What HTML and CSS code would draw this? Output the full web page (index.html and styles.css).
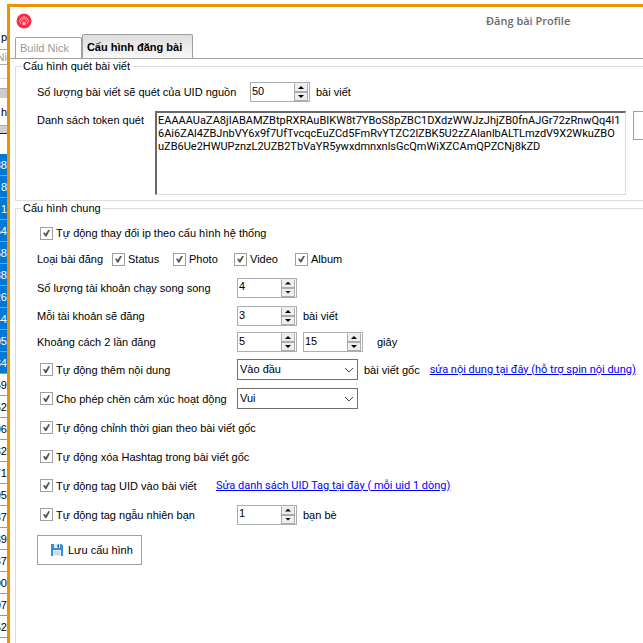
FILE: index.html
```html
<!DOCTYPE html>
<html lang="vi">
<head>
<meta charset="utf-8">
<title>Đăng bài Profile</title>
<link rel="stylesheet" href="styles.css">
</head>
<body>
<div class="desktop">
  <aside class="behind">
    <div class="behind-label">p</div>
    <div class="behind-box">Ni</div>
    <div class="behind-line"></div>
    <div class="behind-bar"></div>
    <div class="behind-caption">h</div>
    <div class="behind-head"></div>
    <ul class="cells">
      <li class="picked">38</li><li class="picked">8</li><li class="picked">1</li><li class="picked">54</li><li class="picked">58</li><li class="picked">38</li><li class="picked">26</li><li class="picked">44</li><li class="picked">05</li><li class="picked">34</li>
      <li>59</li><li>52</li><li>06</li><li>32</li><li>71</li><li>05</li><li>37</li><li>39</li><li>37</li><li>00</li><li>07</li><li>52</li><li></li>
    </ul>
  </aside>
  <main class="dialog">
    <header class="titlebar">
      <svg class="logo" viewBox="0 0 16 16" aria-hidden="true">
        <circle cx="8" cy="8" r="7.5" fill="#fb2b47"/>
        <path d="M5 11a4.200 4.200 0 1 1 6 0M6.200 9a2.200 2.200 0 1 1 3.600 0" fill="none" stroke="#ffc3cb" stroke-width=".8"/>
        <path d="M6.500 12V9.800L8 8.500l1.500 1.300V12z" fill="#ffc3cb"/>
      </svg>
      <h1>Đăng bài Profile</h1>
    </header>
    <nav class="tabs">
      <button type="button" class="tab">Build Nick</button>
      <button type="button" class="tab active">Cấu hình đăng bài</button>
    </nav>
    <form class="panel">
      <fieldset class="group scan">
        <legend>Cấu hình quét bài viết</legend>
        <div class="line scan-count">
          <label for="count">Số lượng bài viết sẽ quét của UID nguồn</label>
          <span class="spin"><input id="count" type="number" value="50"><span class="arrows"><button type="button" class="up" aria-label="Tăng"></button><button type="button" class="down" aria-label="Giảm"></button></span></span>
          <span class="unit">bài viết</span>
        </div>
        <div class="tokens">
          <label for="tokens">Danh sách token quét</label>
          <textarea id="tokens" spellcheck="false">EAAAAUaZA8jIABAMZBtpRXRAuBIKW8t7YBoS8pZBC1DXdzWWJzJhjZB0fnAJGr72zRnwQq4l1
6Ai6ZAl4ZBJnbVY6x9f7UfTvcqcEuZCd5FmRvYTZC2lZBK5U2zZAlanlbALTLmzdV9X2WkuZBO
uZB6Ue2HWUPznzL2UZB2TbVaYR5ywxdmnxnlsGcQmWiXZCAmQPZCNj8kZD</textarea>
          <button type="button" class="side-button" aria-label="Token"></button>
        </div>
      </fieldset>
      <fieldset class="group common">
        <legend>Cấu hình chung</legend>
        <div class="rows">
          <div class="line"><label class="check"><input type="checkbox" checked>Tự động thay đổi ip theo cấu hình hệ thống</label></div>
          <div class="line kinds">
            <span>Loại bài đăng</span>
            <label class="check"><input type="checkbox" checked>Status</label>
            <label class="check"><input type="checkbox" checked>Photo</label>
            <label class="check"><input type="checkbox" checked>Video</label>
            <label class="check"><input type="checkbox" checked>Album</label>
          </div>
          <div class="line">
            <label class="name" for="parallel">Số lượng tài khoản chạy song song</label>
            <span class="spin"><input id="parallel" type="number" value="4"><span class="arrows"><button type="button" class="up" aria-label="Tăng"></button><button type="button" class="down" aria-label="Giảm"></button></span></span>
          </div>
          <div class="line">
            <label class="name" for="each">Mỗi tài khoản sẽ đăng</label>
            <span class="spin"><input id="each" type="number" value="3"><span class="arrows"><button type="button" class="up" aria-label="Tăng"></button><button type="button" class="down" aria-label="Giảm"></button></span></span>
            <span class="unit">bài viết</span>
          </div>
          <div class="line">
            <label class="name" for="from">Khoảng cách 2 lần đăng</label>
            <span class="spin"><input id="from" type="number" value="5"><span class="arrows"><button type="button" class="up" aria-label="Tăng"></button><button type="button" class="down" aria-label="Giảm"></button></span></span>
            <span class="spin"><input type="number" value="15" aria-label="Đến"><span class="arrows"><button type="button" class="up" aria-label="Tăng"></button><button type="button" class="down" aria-label="Giảm"></button></span></span>
            <span class="unit seconds">giây</span>
          </div>
          <div class="line">
            <div class="name"><label class="check"><input type="checkbox" checked>Tự động thêm nội dung</label></div>
            <span class="drop"><select aria-label="Vị trí"><option>Vào đầu</option></select><svg viewBox="0 0 10 6" aria-hidden="true"><path d="M1 1l4 4 4-4"/></svg></span>
            <span class="origin">bài viết gốc</span>
            <a href="#noidung">sửa nội dung tại đây (hỗ trợ spin nội dung)</a>
          </div>
          <div class="line">
            <div class="name"><label class="check"><input type="checkbox" checked>Cho phép chèn cảm xúc hoạt động</label></div>
            <span class="drop"><select aria-label="Cảm xúc"><option>Vui</option></select><svg viewBox="0 0 10 6" aria-hidden="true"><path d="M1 1l4 4 4-4"/></svg></span>
          </div>
          <div class="line"><label class="check"><input type="checkbox" checked>Tự động chỉnh thời gian theo bài viết gốc</label></div>
          <div class="line"><label class="check"><input type="checkbox" checked>Tự động xóa Hashtag trong bài viết gốc</label></div>
          <div class="line">
            <div class="name short"><label class="check"><input type="checkbox" checked>Tự động tag UID vào bài viết</label></div>
            <a href="#uid">Sửa danh sách UID Tag tại đây ( mỗi uid 1 dòng)</a>
          </div>
          <div class="line">
            <div class="name"><label class="check"><input type="checkbox" checked>Tự động tag ngẫu nhiên bạn</label></div>
            <span class="spin"><input type="number" value="1" aria-label="Số bạn bè"><span class="arrows"><button type="button" class="up" aria-label="Tăng"></button><button type="button" class="down" aria-label="Giảm"></button></span></span>
            <span class="unit">bạn bè</span>
          </div>
        </div>
        <button type="button" class="save">
          <svg viewBox="0 0 12 12" aria-hidden="true">
            <path d="M0 0h10.500L12 1.500V12H0z" fill="#2f8fdc"/>
            <path d="M3 0h6v4H3z" fill="#dcecf8"/><path d="M6.500 .5H8v3H6.500z" fill="#1d4f7c"/>
            <path d="M2 6h8v6H2z" fill="#e9eef2"/><path d="M3 8h6M3 10h6" stroke="#b9c3cb"/>
          </svg>
          Lưu cấu hình
        </button>
      </fieldset>
    </form>
  </main>
</div>
</body>
</html>
```
FILE: styles.css
```css
* { box-sizing: border-box; }
body {
  margin: 0;
  overflow: hidden;
  background: #fff;
  color: #000;
  font: 11px/14px "Liberation Sans", Arial, sans-serif;
}
button, input, select, textarea { font: inherit; color: inherit; }
.desktop { display: flex; height: 100vh; overflow: hidden; }

/* window behind the dialog */
.behind { flex: 0 0 7px; overflow: hidden; padding-top: 30px; }
.behind > div { display: flex; justify-content: flex-end; }
.behind-label { height: 19px; }
.behind-box { height: 16px; border: solid #aaa; border-width: 1px 0; color: #999; }
.behind-line { height: 14px; border-bottom: 1px solid #ddd; }
.behind-bar { height: 10px; margin-top: 9px; background: #ccc; border-top: 1px solid #aaa; }
.behind-caption { height: 27px; padding-top: 7px; }
.behind-head { height: 9px; background: #d0d0d0; border-top: 1px solid #aaa; border-bottom: 1px solid #222; }
.cells { margin: 20px 0 0; padding: 0; list-style: none; }
.cells li {
  display: flex;
  justify-content: flex-end;
  align-items: center;
  height: 22px;
  border-bottom: 1px solid #999;
}
.cells .picked { background: #0078d7; color: #fff; }

/* dialog */
.dialog {
  flex: 1;
  min-width: 0;
  margin-top: 4px;
  border: solid #ee9200;
  border-width: 3px 0 0 3px;
  background: #fff;
}
.titlebar { display: flex; align-items: center; height: 28px; padding-left: 6px; }
.logo { flex: none; width: 16px; height: 16px; }
.titlebar h1 {
  margin: 0 0 0 454px;
  color: #6b6b6b;
  font: 600 11px/16px "Open Sans", "Noto Sans", sans-serif;
  white-space: nowrap;
}
.tabs { display: flex; align-items: flex-end; height: 24px; padding-left: 5px; border-bottom: 1px solid #a0a0a0; }
.tab {
  height: 21px;
  padding: 0 12px 0 4px;
  border: 1px solid #a0a0a0;
  border-bottom: 0;
  border-radius: 2px 2px 0 0;
  background: #fff;
  color: #999;
  white-space: nowrap;
}
.tab.active {
  height: 24px;
  padding: 0 10px 0 4px;
  background: linear-gradient(#ddd, #f8f8f8);
  color: #000;
  font-weight: bold;
}
.panel { padding-left: 5px; }
.group {
  min-width: 0;
  margin: 0;
  padding: 0 0 0 21px;
  border: 1px solid #dcdcdc;
  border-right: 0;
}
.group legend { margin-left: -15px; padding: 0 2px 0 1px; }
.scan { height: 142px; }
.line { display: flex; align-items: center; white-space: nowrap; }
.scan-count { height: 28px; margin-top: 5px; }
.scan-count label { width: 213px; }
.tokens { display: flex; align-items: flex-start; margin-top: 5px; }
.tokens label { flex: 0 0 118px; padding-top: 2px; white-space: nowrap; }
.tokens textarea {
  flex: 1;
  height: 84px;
  padding: 1px;
  border: 1px solid #dcdcdc;
  border-top: 2px solid #696969;
  border-left: 2px solid #696969;
  outline: 0;
  resize: none;
  overflow: hidden;
  font-family: Roboto, "Liberation Sans", sans-serif;
  line-height: 13px;
  white-space: pre;
}
.side-button { flex: 0 0 10px; height: 29px; margin-left: 7px; padding: 0; border: 1px solid #a0a0a0; border-right: 0; background: #fff; }

.rows {
  display: grid;
  grid-template-rows: 26px 26px 31px 26px 26px repeat(6, 29px);
  padding-top: 5px;
}
.name { flex: 0 0 200px; }
.name.short { flex-basis: 179px; }
.unit { margin-left: 6px; }
.unit.seconds { margin-left: 14px; }
.origin { margin: 0 10px 0 6px; }
.check { display: flex; align-items: center; gap: 3px; padding-left: 3px; }
.check input {
  appearance: none;
  flex: none;
  display: grid;
  place-items: center;
  width: 13px;
  height: 13px;
  margin: 0;
  border: 1px solid #a0a0a0;
  background: #fff;
}
.check input:checked::before {
  content: "";
  width: 7px;
  height: 7px;
  background: #555;
  clip-path: polygon(0 48%, 22% 42%, 40% 62%, 78% 0, 100% 6%, 50% 100%, 30% 100%);
}
.kinds > span { width: 72px; }
.kinds .check { flex: 0 0 61px; }

.spin { display: flex; width: 60px; height: 20px; border: 1px solid #abadb3; background: #fff; }
.spin + .spin { margin-left: 6px; }
.spin input {
  appearance: textfield;
  flex: 1;
  min-width: 0;
  height: 15px;
  padding: 0 1px;
  border: 0;
  outline: 0;
  background: none;
}
.spin input::-webkit-inner-spin-button { appearance: none; margin: 0; }
.arrows { display: flex; flex-direction: column; width: 15px; padding-right: 1px; }
.arrows button {
  display: grid;
  place-items: center;
  height: 9px;
  padding: 0;
  border: 1px solid #acacac;
  background: #eee;
}
.arrows .up { border-top-color: #eee; }
.arrows button::before { content: ""; width: 6px; height: 3px; background: #000; clip-path: polygon(50% 0, 100% 100%, 0 100%); }
.arrows .down::before { clip-path: polygon(0 0, 100% 0, 50% 100%); }

.drop { display: grid; width: 121px; height: 21px; }
.drop select, .drop svg { grid-area: 1 / 1; }
.drop select {
  appearance: none;
  width: 100%;
  height: 21px;
  padding: 0 20px 2px 2px;
  border: 1px solid #707070;
  border-radius: 0;
  background: #fff;
}
.drop svg { place-self: center end; width: 10px; height: 6px; margin-right: 4px; fill: none; stroke: #444; pointer-events: none; }
a { color: #00f; font-family: Roboto, "Liberation Sans", sans-serif; }
.save {
  display: flex;
  align-items: center;
  gap: 5px;
  height: 30px;
  margin-top: 6px;
  padding: 0 8px 0 13px;
  border: 1px solid #a0a0a0;
  background: #fff;
}
.save svg { width: 12px; height: 12px; }
.common { min-height: 450px; border-bottom: 0; }
```
